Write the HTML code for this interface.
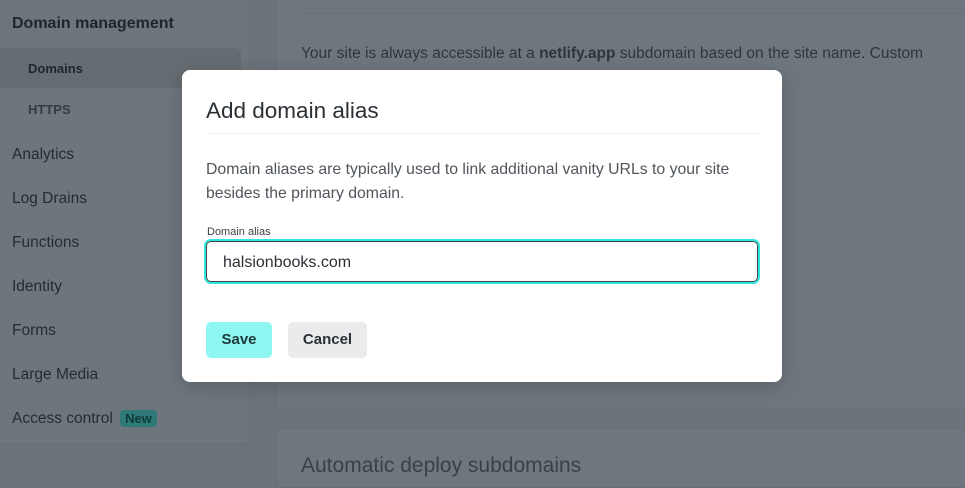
<!DOCTYPE html>
<html><head><style>
*{box-sizing:border-box;margin:0;padding:0}
body{width:965px;height:472px;overflow:hidden;background:#6c747b;font-family:"Liberation Sans",sans-serif;position:relative}
.side{position:absolute;left:-10px;top:-10px;width:260px;height:455px;border:1px solid #666e74;border-radius:6px;background:#6e767d}
.si{position:absolute;left:12px;font-size:15.5px;color:#262b31}
.sub{position:absolute;left:28px;font-size:13px;font-weight:bold;color:#343a40}
.act{position:absolute;left:0;top:48px;width:241px;height:40px;background:#656d73;border-radius:0 6px 6px 0}
.card{position:absolute;left:276px;width:720px;border:1px solid #666e74;border-radius:6px;background:#6f777e}
.modal{position:absolute;left:182px;top:70px;width:600px;height:312px;background:#fff;border-radius:8px;box-shadow:0 4px 20px rgba(0,0,0,.2)}
</style></head><body>
<div class="side"></div>
<div class="si" style="top:15px;font-weight:bold;color:#1f252b;font-size:16px">Domain management</div>
<div class="act"></div>
<div class="sub" style="top:61px;color:#1f252b">Domains</div>
<div class="sub" style="top:102px">HTTPS</div>
<div class="si" style="top:146px">Analytics</div>
<div class="si" style="top:190px">Log Drains</div>
<div class="si" style="top:234px">Functions</div>
<div class="si" style="top:278px">Identity</div>
<div class="si" style="top:322px">Forms</div>
<div class="si" style="top:366px">Large Media</div>
<div class="si" style="top:410px">Access control <span style="background:#2f7a78;color:#0e3a3a;font-size:13px;font-weight:bold;padding:1px 5px;border-radius:4px;margin-left:3px">New</span></div>
<div class="card" style="top:-10px;height:420px">
<div style="position:absolute;left:24px;right:0;top:22px;border-top:1px solid #687077"></div>
<div style="position:absolute;left:24px;top:51px;font-size:15.5px;line-height:24px;color:#2f353b;white-space:nowrap">Your site is always accessible at a <b>netlify.app</b> subdomain based on the site name. Custom<br>domains allow visitors to access your site at your own domain.</div>
<div style="position:absolute;left:24px;top:350px;width:158px;height:36px;background:#677076;border-radius:6px"></div>
</div>
<div class="card" style="top:428px;height:60px">
<div style="position:absolute;left:24px;top:25px;font-size:21px;color:#3a4046">Automatic deploy subdomains</div>
</div>
<div class="modal">
<div style="position:absolute;left:24px;top:28px;font-size:22.5px;color:#2b3035">Add domain alias</div>
<div style="position:absolute;left:24px;right:22px;top:63px;border-top:1px solid #eeeff0"></div>
<div style="position:absolute;left:24px;top:88px;font-size:15.8px;line-height:24px;color:#50565c;width:545px">Domain aliases are typically used to link additional vanity URLs to your site besides the primary domain.</div>
<div style="position:absolute;left:25px;top:156px;font-size:11px;color:#3b4046">Domain alias</div>
<div style="position:absolute;left:24px;top:171px;width:552px;height:41px;border:1px solid #444;border-radius:5px;box-shadow:0 0 0 2px #2ee6e0"></div>
<div style="position:absolute;left:41px;top:184px;font-size:16px;color:#2b3035">halsionbooks.com</div>
<div style="position:absolute;left:24px;top:252px;width:66px;height:36px;background:#8ff7f1;border-radius:5px;font-size:15px;font-weight:bold;color:#1e3a3a;text-align:center;line-height:36px">Save</div>
<div style="position:absolute;left:106px;top:252px;width:79px;height:36px;background:#ebebed;border-radius:5px;font-size:15px;font-weight:bold;color:#2b3035;text-align:center;line-height:36px">Cancel</div>
</div>
</body></html>
